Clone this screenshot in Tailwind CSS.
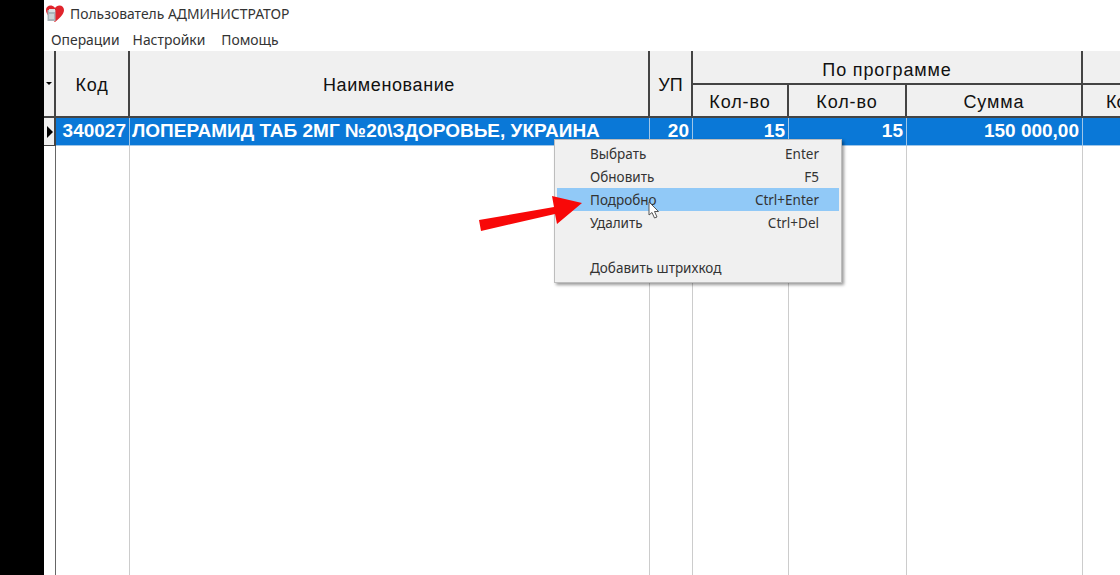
<!DOCTYPE html>
<html><head><meta charset="utf-8"><script src="https://cdn.jsdelivr.net/npm/@tailwindcss/browser@4"></script></head>
<body class="bg-white">
<div class="relative w-[1120px] h-[575px] overflow-hidden flex bg-white font-['Noto_Sans','Open_Sans',sans-serif] text-[#222]">
  <div class="w-[44px] h-full bg-black shrink-0"></div>
  <div class="flex-1 flex flex-col min-w-0">
    <div class="h-[28px] flex items-center pl-[1px] gap-[5px] text-[13.9px] text-[#333]">
      <svg class="w-[20px] h-[20px]" viewBox="0 0 20 20"><path d="M10 18 C4 13 1 10 1 6 C1 2.500 4 1 6.500 1.500 C8 1.800 9.500 3 10 4 C11 2.500 12.500 1.500 14.500 1.500 C17 1.500 19 3.500 19 6 C19 10 15 14 10 18Z" fill="#e0242c"/><rect x="2.500" y="6" width="8" height="11" fill="#a9b4ba"/><rect x="4" y="5" width="6" height="3" fill="#d9e0e3"/><rect x="4" y="10" width="5" height="5" fill="#ccd3d6"/></svg>
      <span class="leading-none">Пользователь АДМИНИСТРАТОР</span>
    </div>
    <div class="h-[23px] flex items-center pl-[7px] gap-[13px] text-[13.9px] text-[#333] pt-[2px]">
      <span>Операции</span><span>Настройки</span><span class="ml-[3px]">Помощь</span>
    </div>
    <div class="flex-1 grid grid-cols-[12px_74px_520px_43px_96px_118px_176px_1fr] grid-rows-[34px_33px_28px_1fr] font-['Liberation_Sans',sans-serif]">
      <div class="row-span-2 bg-[#f0f0f0] border-r-2 border-b-2 border-[#444] flex items-center"><span class="w-0 h-0 border-x-[3px] border-x-transparent border-t-[3px] border-t-black ml-[2px]"></span></div>
      <div class="row-span-2 bg-[#f0f0f0] border-r-2 border-b-2 border-[#444] flex items-center justify-center pt-[3px] text-[18px] tracking-[0.8px] text-[#111]">Код</div>
      <div class="row-span-2 bg-[#f0f0f0] border-r-2 border-b-2 border-[#444] flex items-center justify-center pt-[3px] text-[18px] tracking-[0.6px] text-[#111]">Наименование</div>
      <div class="row-span-2 bg-[#f0f0f0] border-r-2 border-b-2 border-[#444] flex items-center justify-center pt-[3px] text-[18px] text-[#111]">УП</div>
      <div class="col-span-3 bg-[#f0f0f0] border-r-2 border-b-2 border-[#444] flex items-center justify-center pt-[6px] text-[18px] tracking-[0.85px] text-[#111]">По программе</div>
      <div class="bg-[#f0f0f0] border-b-2 border-[#444]"></div>
      <div class="bg-[#f0f0f0] border-r-2 border-b-2 border-[#444] flex items-center justify-center pt-[4px] text-[18px] tracking-[0.9px] text-[#111]">Кол-во</div>
      <div class="bg-[#f0f0f0] border-r-2 border-b-2 border-[#444] flex items-center justify-center pt-[4px] text-[18px] tracking-[0.9px] text-[#111]">Кол-во</div>
      <div class="bg-[#f0f0f0] border-r-2 border-b-2 border-[#444] flex items-center justify-center pt-[4px] text-[18px] tracking-[0.9px] text-[#111]">Сумма</div>
      <div class="bg-[#f0f0f0] border-b-2 border-[#444] text-[18px] text-[#111] flex items-center pt-[4px] pl-[23px] whitespace-nowrap overflow-hidden">Кол-во</div>

      <div class="bg-[#f0f0f0] border-r-2 border-b border-[#444] flex items-center"><span class="w-0 h-0 border-y-[6px] border-y-transparent border-l-[6px] border-l-black ml-[3px]"></span></div>
      <div class="bg-[#0a78d7] border-r border-b border-[#9fc6e8] text-white font-bold text-[19px] flex items-center justify-end pr-[3px]">340027</div>
      <div class="bg-[#0a78d7] border-r border-b border-[#9fc6e8] text-white font-bold text-[19px] flex items-center pl-[2px] whitespace-nowrap overflow-hidden">ЛОПЕРАМИД ТАБ 2МГ №20\ЗДОРОВЬЕ, УКРАИНА</div>
      <div class="bg-[#0a78d7] border-r border-b border-[#9fc6e8] text-white font-bold text-[19px] flex items-center justify-end pr-[3px]">20</div>
      <div class="bg-[#0a78d7] border-r border-b border-[#9fc6e8] text-white font-bold text-[19px] flex items-center justify-end pr-[3px]">15</div>
      <div class="bg-[#0a78d7] border-r border-b border-[#9fc6e8] text-white font-bold text-[19px] flex items-center justify-end pr-[3px]">15</div>
      <div class="bg-[#0a78d7] border-r border-b border-[#9fc6e8] text-white font-bold text-[19px] flex items-center justify-end pr-[3px]">150 000,00</div>
      <div class="bg-[#0a78d7] border-b border-[#9fc6e8]"></div>

      <div class="border-r border-[#666]"></div>
      <div class="border-r border-[#ccc]"></div>
      <div class="border-r border-[#ccc]"></div>
      <div class="border-r border-[#ccc]"></div>
      <div class="border-r border-[#ccc]"></div>
      <div class="border-r border-[#ccc]"></div>
      <div class="border-r border-[#ccc]"></div>
      <div></div>
    </div>
  </div>

  <div class="absolute left-[554px] top-[139px] w-[288px] h-[144px] bg-[#f0f0f0] border border-[#bdbdbd] shadow-[2px_2px_3px_rgba(0,0,0,0.4)] pt-[2px] px-[2px] text-[13.5px] text-[#333] font-['Noto_Sans',sans-serif]">
    <div class="h-[23px] flex items-center justify-between pl-[33px] pr-[20px] pt-[2px]"><span>Выбрать</span><span>Enter</span></div>
    <div class="h-[23px] flex items-center justify-between pl-[33px] pr-[20px] pt-[2px]"><span>Обновить</span><span>F5</span></div>
    <div class="h-[23px] flex items-center justify-between pl-[33px] pr-[20px] pt-[2px] bg-[#91c9f7]"><span>Подробно</span><span>Ctrl+Enter</span></div>
    <div class="h-[23px] flex items-center justify-between pl-[33px] pr-[20px] pt-[2px]"><span>Удалить</span><span>Ctrl+Del</span></div>
    <div class="h-[22px]"></div>
    <div class="h-[23px] flex items-center pl-[33px] pt-[2px]"><span>Добавить штрихкод</span></div>
  </div>

  <svg class="absolute left-[478px] top-[194px]" width="106" height="40" viewBox="0 0 106 40"><path d="M1 26 L76 13 L74 2 L104 9 L79 30 L77 20 L3 37Z" fill="#f80808"/></svg>
  <svg class="absolute left-[648px] top-[201px]" width="13" height="19" viewBox="0 0 13 19"><path d="M1 1 L1 14 L4 11.500 L6.500 17 L9 16 L6.500 10.500 L10.500 10.500Z" fill="#fff" stroke="#555" stroke-width="1"/></svg>
</div>
</body></html>
